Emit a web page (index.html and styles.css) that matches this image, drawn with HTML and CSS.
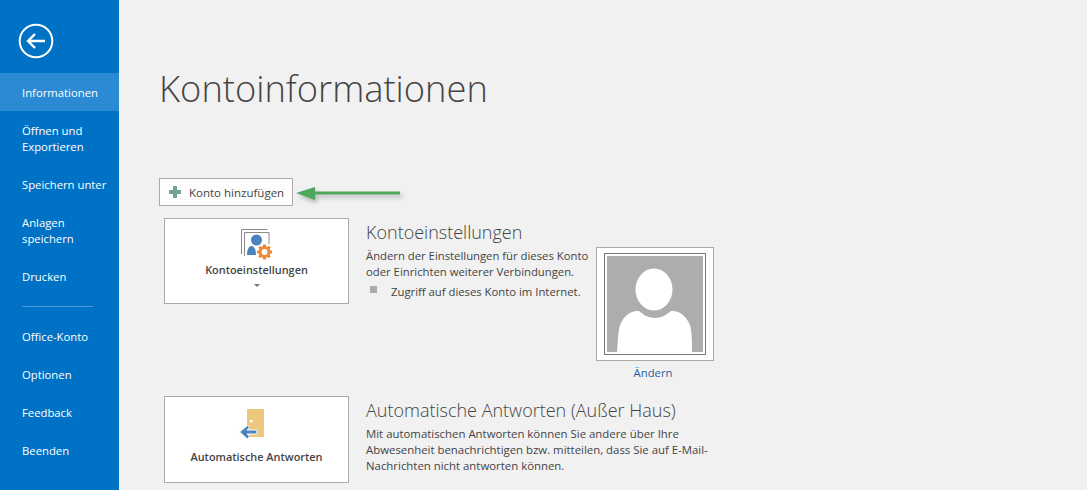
FILE: index.html
```html
<!DOCTYPE html>
<html lang="de">
<head>
<meta charset="utf-8">
<title>Kontoinformationen</title>
<link rel="stylesheet" href="styles.css">
</head>
<body>
<div class="app">
  <nav class="side">
    <div class="back">
      <svg width="36" height="36" viewBox="0 0 36 36" fill="none" stroke="#fff">
        <circle cx="18" cy="18" r="16.3" stroke-width="2"/>
        <path d="M10 18H27M17 11l-7 7 7 7" stroke-width="2.4"/>
      </svg>
    </div>
    <a class="item active">Informationen</a>
    <a class="item">Öffnen und<br>Exportieren</a>
    <a class="item">Speichern unter</a>
    <a class="item">Anlagen<br>speichern</a>
    <a class="item">Drucken</a>
    <div class="sep"></div>
    <a class="item">Office-Konto</a>
    <a class="item">Optionen</a>
    <a class="item">Feedback</a>
    <a class="item">Beenden</a>
  </nav>
  <main class="main">
    <h1 class="title">Kontoinformationen</h1>
    <div class="addrow">
      <button class="addbtn">
        <svg width="12" height="12" viewBox="0 0 12 12"><path fill="#6fa58f" d="M4 0h4v4h4v4H8v4H4V8H0V4h4z"/></svg>
        <span>Konto hinzufügen</span>
      </button>
      <svg class="arrow" width="110" height="28" viewBox="0 0 110 28">
        <path fill="#4ea85c" d="M2 15l19-6v4.500h85v3H21V22z"/>
      </svg>
    </div>
    <section class="sect first">
      <button class="card">
        <svg class="cardicon" width="32" height="31" viewBox="0 0 32 31">
          <path fill="none" stroke="#8a8a8a" d="M.5 25V.5h26M3.500 27V3.500h24.500V15"/>
          <circle cx="15.500" cy="11" r="5.500" fill="#4a83bd"/>
          <path fill="#4a83bd" d="M6 26c0-6 2-9 4.500-9s4.500 3 4.500 9z"/>
          <circle cx="23.500" cy="23" r="4.500" fill="none" stroke="#ea8a3c" stroke-width="3"/>
          <path stroke="#ea8a3c" stroke-width="3" d="M23.500 15.500v2.500M23.500 28v2.500M16 23h2.500M28.500 23h2.500M18.200 17.700l2 2M26.800 26.300l2 2M18.200 28.300l2-2M26.800 19.700l2-2"/>
        </svg>
        <span class="cardlabel">Kontoeinstellungen</span>
        <span class="caret"></span>
      </button>
      <div class="desc">
        <h2>Kontoeinstellungen</h2>
        <p>Ändern der Einstellungen für dieses Konto<br>oder Einrichten weiterer Verbindungen.</p>
        <div class="bullet"><i></i><span>Zugriff auf dieses Konto im Internet.</span></div>
      </div>
      <div class="photo">
        <div class="frame">
          <svg width="96" height="96" viewBox="0 0 96 96">
            <rect width="96" height="96" fill="#adadad"/>
            <ellipse cx="47" cy="33.500" rx="18.500" ry="21" fill="#fff"/>
            <path fill="#fff" d="M10 96C11 85 11 72 14 67 17 60 24 54 32 55 36 58 40 62 48 62 56 62 60 58 64 55 72 54 79 60 82 67 85 72 85 85 85 96z"/>
          </svg>
        </div>
        <a class="change">Ändern</a>
      </div>
    </section>
    <section class="sect second">
      <button class="card auto">
        <svg class="cardicon" width="33" height="31" viewBox="0 0 33 31">
          <rect x="7" y="0" width="17" height="28" fill="#eec77e"/>
          <rect x="10" y="11" width="2.500" height="2.500" fill="#fff"/>
          <path fill="#4a83bd" stroke="#fff" d="M7.500 16.500l2 2L7 21h10v4H7l2.500 2.500-2 2.500L-.5 23z"/>
        </svg>
        <span class="cardlabel">Automatische Antworten</span>
      </button>
      <div class="desc wide">
        <h2>Automatische Antworten (Außer Haus)</h2>
        <p>Mit automatischen Antworten können Sie andere über Ihre<br>Abwesenheit benachrichtigen bzw. mitteilen, dass Sie auf E-Mail-<br>Nachrichten nicht antworten können.</p>
      </div>
    </section>
  </main>
</div>
</body>
</html>
```

FILE: styles.css
```css
* { box-sizing: border-box; }
html, body { margin: 0; height: 100%; overflow: hidden; }
body { background: #f1f1f1; font-family: "Open Sans", "Noto Sans", sans-serif; color: #444; }
.app { display: flex; height: 490px; }
.side { width: 119px; flex: none; background: #0072c6; color: #fff; display: flex; flex-direction: column; }
.back { height: 73px; padding: 23px 0 0 18px; }
.back svg { display: block; }
.item { display: block; padding: 12px 10px 10px 22px; font-size: 11.3px; line-height: 16px; color: #fff; white-space: nowrap; }
.item.active { background: #2a8ad4; }
.sep { height: 1px; width: 71px; margin: 11px 0 10px 22px; background: #4d9ad8; flex: none; }
.main { flex: 1; padding: 0 0 0 40px; min-width: 0; }
.title { margin: 0; padding-top: 61px; height: 178px; font-size: 36.300px; line-height: 54px; font-weight: 300; color: #444; }
.addrow { display: flex; align-items: center; height: 28px; }
.addbtn { width: 134px; height: 28px; display: flex; align-items: center; gap: 8px; padding: 0 0 0 9px; background: #fdfdfd; border: 1px solid #ababab; font: inherit; font-size: 11.500px; color: #444; }
.addbtn svg { flex: none; }
.arrow { margin: 0 0 0 1px; filter: drop-shadow(2px 3px 2px rgba(0,0,0,.25)); }
.sect { display: flex; margin-left: 5px; }
.sect.first { margin-top: 12px; height: 178px; }
.card { width: 185px; height: 86px; flex: none; background: #fff; border: 1px solid #ababab; padding: 10px 0 0; display: flex; flex-direction: column; align-items: center; font: inherit; color: #444; }
.card.auto { height: 87px; padding-top: 12px; }
.cardicon { display: block; flex: none; overflow: visible; }
.cardlabel { font-size: 10.900px; font-weight: 600; line-height: 16px; margin-top: 2px; color: #444; white-space: nowrap; }
.card.auto .cardlabel { margin-top: 9px; }
.caret { margin-top: 6px; width: 0; height: 0; border: 3px solid transparent; border-top-color: #777; border-bottom-width: 0; }
.desc { width: 230px; margin-left: 17px; flex: none; }
.desc.wide { width: 360px; }
.desc h2 { margin: 0; font-size: 18px; line-height: 24px; font-weight: 300; color: #444; white-space: nowrap; padding-top: 2px; height: 30px; }
.desc p { margin: 0; font-size: 11.300px; line-height: 16px; color: #444; white-space: nowrap; }
.desc.wide p { font-size: 11.400px; }
.bullet { display: flex; align-items: center; height: 16px; font-size: 11.300px; margin-top: 3px; white-space: nowrap; }
.bullet i { width: 7px; height: 7px; background: #ababab; margin: 0 14px 3px 4px; flex: none; }
.photo { margin: 29px 0 0 0; width: 118px; display: flex; flex-direction: column; align-items: center; flex: none; }
.frame { width: 118px; height: 114px; background: #fff; border: 1px solid #ababab; padding: 8px 10px; display: flex; }
.frame svg { display: block; flex: none; outline: 1px solid #7a7a7a; outline-offset: 2px; }
.change { margin: 4px 4px 0 0; font-size: 11.300px; line-height: 16px; color: #2b5f9e; }
.sect.second { margin-top: 0; }
```
